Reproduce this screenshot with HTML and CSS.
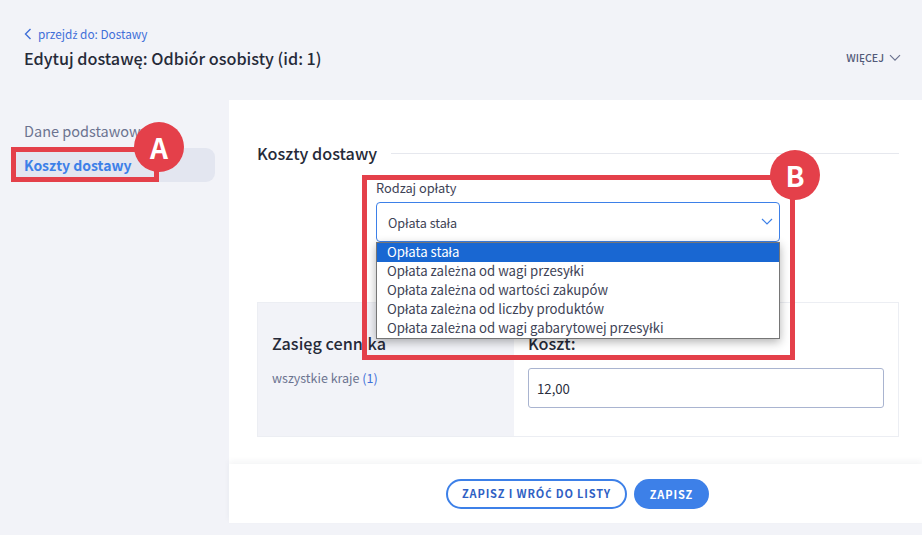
FILE: index.html
```html
<!DOCTYPE html>
<html lang="pl">
<head>
<meta charset="utf-8">
<title>Edytuj dostawę</title>
<link rel="stylesheet" href="styles.css">
</head>
<body>
<div class="page">
  <header class="top">
    <div class="top-left">
      <a class="back">
        <svg class="back-ico" width="8" height="12" viewBox="0 0 8 12"><path d="M6.5 1 1.5 6l5 5" fill="none" stroke="#3f6fd8" stroke-width="1.4"/></svg>
        <span>przejd<span class="dk">ź</span> do: Dostawy</span>
      </a>
      <h1 class="title">Edytuj dostawę: Odbiór osobisty (id: 1)</h1>
    </div>
    <div class="more">
      <span>WIĘCEJ</span>
      <svg width="12" height="8" viewBox="0 0 12 8"><path d="M1 1.2 6 6.2l5-5" fill="none" stroke="#6c7390" stroke-width="1.2"/></svg>
    </div>
  </header>
  <div class="body-row">
    <nav class="side">
      <a class="side-item">Dane podstawowe</a>
      <a class="side-item active">Koszty dostawy</a>
    </nav>
    <main class="panel">
      <div class="panel-content">
        <div class="heading-row">
          <h2 class="heading">Koszty dostawy</h2>
          <div class="heading-line"></div>
        </div>
        <div class="field">
          <label class="field-label">Rodzaj opłaty</label>
          <div class="select">
            <span>Opłata stała</span>
            <svg width="12" height="8" viewBox="0 0 12 8"><path d="M1 1 6 6l5-5" fill="none" stroke="#3d80e8" stroke-width="1.2"/></svg>
            <ul class="options">
              <li class="option selected">Opłata stała</li>
              <li class="option">Opłata zale<span class="dk">ż</span>na od wagi przesyłki</li>
              <li class="option">Opłata zale<span class="dk">ż</span>na od warto<span class="dk">ś</span>ci zakupów</li>
              <li class="option">Opłata zale<span class="dk">ż</span>na od liczby produktów</li>
              <li class="option">Opłata zale<span class="dk">ż</span>na od wagi gabarytowej przesyłki</li>
            </ul>
          </div>
        </div>
        <section class="range">
          <div class="range-left">
            <h3 class="range-title">Zasięg cennika</h3>
            <p class="range-text">wszystkie kraje <a class="range-link">(1)</a></p>
          </div>
          <div class="range-right">
            <h3 class="range-title">Koszt:</h3>
            <div class="input">12,00</div>
          </div>
        </section>
      </div>
      <footer class="actions">
        <button class="btn btn-outline">ZAPISZ I WRÓ<span class="dk">Ć</span> DO LISTY</button>
        <button class="btn btn-fill">ZAPISZ</button>
      </footer>
    </main>
  </div>
</div>
<div class="mark mark-a"></div>
<div class="mark mark-b"></div>
<div class="badge badge-a">A</div>
<div class="badge badge-b">B</div>
</body>
</html>
```
FILE: styles.css
```css
* { box-sizing: border-box; }
html, body { margin: 0; padding: 0; }
body {
  width: 922px;
  height: 535px;
  overflow: hidden;
  position: relative;
  background: #f2f3f8;
  color: #2b2f3f;
  font-family: "Noto Sans CJK SC", "Noto Sans", sans-serif;
  font-size: 14px;
}
h1, h2, h3, p, ul { margin: 0; padding: 0; }
.dk { font-family: "Noto Sans", sans-serif; font-size: .9em; }
.page { display: flex; flex-direction: column; height: 535px; }
.top {
  height: 100px;
  padding: 26px 21px 0 24px;
  display: flex;
  justify-content: space-between;
  align-items: flex-start;
}
.back {
  display: flex;
  align-items: center;
  gap: 6px;
  height: 16px;
  color: #3f6fd8;
  font-size: 11.8px;
  line-height: 16px;
}
.back-ico { margin-top: -1px; }
.title {
  margin-top: 4px;
  font-size: 16.2px;
  line-height: 24px;
  font-weight: 500;
  color: #262a38;
}
.more {
  margin-top: 24px;
  display: flex;
  align-items: center;
  gap: 5px;
  font-size: 10.6px;
  line-height: 16px;
  font-weight: 500;
  color: #535a78;
}
.body-row { display: flex; height: 423px; }
.side { width: 229px; padding: 14px 14px 0 11px; flex: none; }
.side-item {
  display: block;
  height: 34px;
  padding-left: 13px;
  line-height: 20px;
  padding-top: 7px;
  font-size: 14.5px;
  color: #6c7390;
  border-radius: 9px;
}
.side-item.active {
  background: #e3e6f0;
  color: #3d80e8;
  font-size: 14px;
  font-weight: 700;
}
.panel {
  flex: 1;
  background: #fff;
  display: flex;
  flex-direction: column;
}
.panel-content { flex: 1; padding: 41px 23px 0 28px; }
.heading-row { display: flex; align-items: center; gap: 14px; height: 24px; }
.heading { font-size: 16.2px; line-height: 24px; font-weight: 500; color: #262a38; }
.heading-line { flex: 1; height: 1px; background: #e6e8ee; }
.field { margin: 13px 0 0 119px; width: 404px; }
.field-label { display: block; font-size: 12.8px; line-height: 20px; color: #3e4356; }
.select {
  position: relative;
  margin-top: 4px;
  height: 40px;
  padding: 0 6px 0 11px;
  display: flex;
  align-items: center;
  justify-content: space-between;
  border: 1px solid #3d80e8;
  border-radius: 4px;
  font-size: 12.6px;
  color: #3e4356;
}
.options {
  position: absolute;
  left: -1px;
  right: -1px;
  top: 39px;
  list-style: none;
  background: #fff;
  border: 1px solid #767676;
  box-shadow: 0 3px 9px rgba(0,0,0,.3);
  font-size: 13.2px;
  z-index: 2;
}
.option { height: 19px; line-height: 18px; padding-left: 10px; color: #3e4356; }
.option.selected { background: #1967d2; color: #fff; }
.range {
  margin-top: 60px;
  height: 135px;
  display: flex;
  border: 1px solid #eceef3;
}
.range-left { width: 256px; background: #f2f3f8; padding: 28px 14px 0; }
.range-right { flex: 1; padding: 28px 14px 0; }
.range-title { font-size: 16.2px; line-height: 24px; font-weight: 500; color: #262a38; }
.range-text { margin-top: 13px; font-size: 12.5px; line-height: 20px; color: #6c7390; }
.range-link { color: #3f6fd8; }
.input {
  margin-top: 13px;
  height: 40px;
  padding: 0 8px;
  display: flex;
  align-items: center;
  border: 1px solid #a9b4d0;
  border-radius: 3px;
  font-size: 13.2px;
  color: #2b2f3f;
}
.actions {
  height: 59px;
  flex: none;
  display: flex;
  justify-content: center;
  align-items: flex-start;
  gap: 7px;
  padding-top: 15px;
  padding-left: 4px;
  box-shadow: 0 -3px 6px rgba(40,50,80,.05);
  background: #fff;
}
.btn {
  height: 30px;
  border-radius: 15px;
  font-family: inherit;
  font-size: 11px;
  font-weight: 700;
  letter-spacing: .85px;
  line-height: 1;
  padding: 0;
}
.btn-outline {
  width: 181px;
  background: #fff;
  border: 2px solid #3d80e8;
  color: #2f5fc4;
}
.btn-fill {
  width: 75px;
  background: #3d80e8;
  border: 0;
  color: #fff;
}
.mark { position: absolute; border: 5px solid #e4404a; z-index: 3; }
.mark-a { left: 11px; top: 147px; width: 148px; height: 35px; }
.mark-b { left: 362px; top: 175px; width: 433px; height: 185px; }
.badge {
  position: absolute;
  width: 50px;
  height: 50px;
  border-radius: 50%;
  background: #e4404a;
  color: #fff;
  font-size: 28px;
  font-weight: 700;
  line-height: 50px;
  text-align: center;
  z-index: 4;
}
.badge-a { left: 134px; top: 122px; }
.badge-b { left: 770px; top: 150px; }
```
